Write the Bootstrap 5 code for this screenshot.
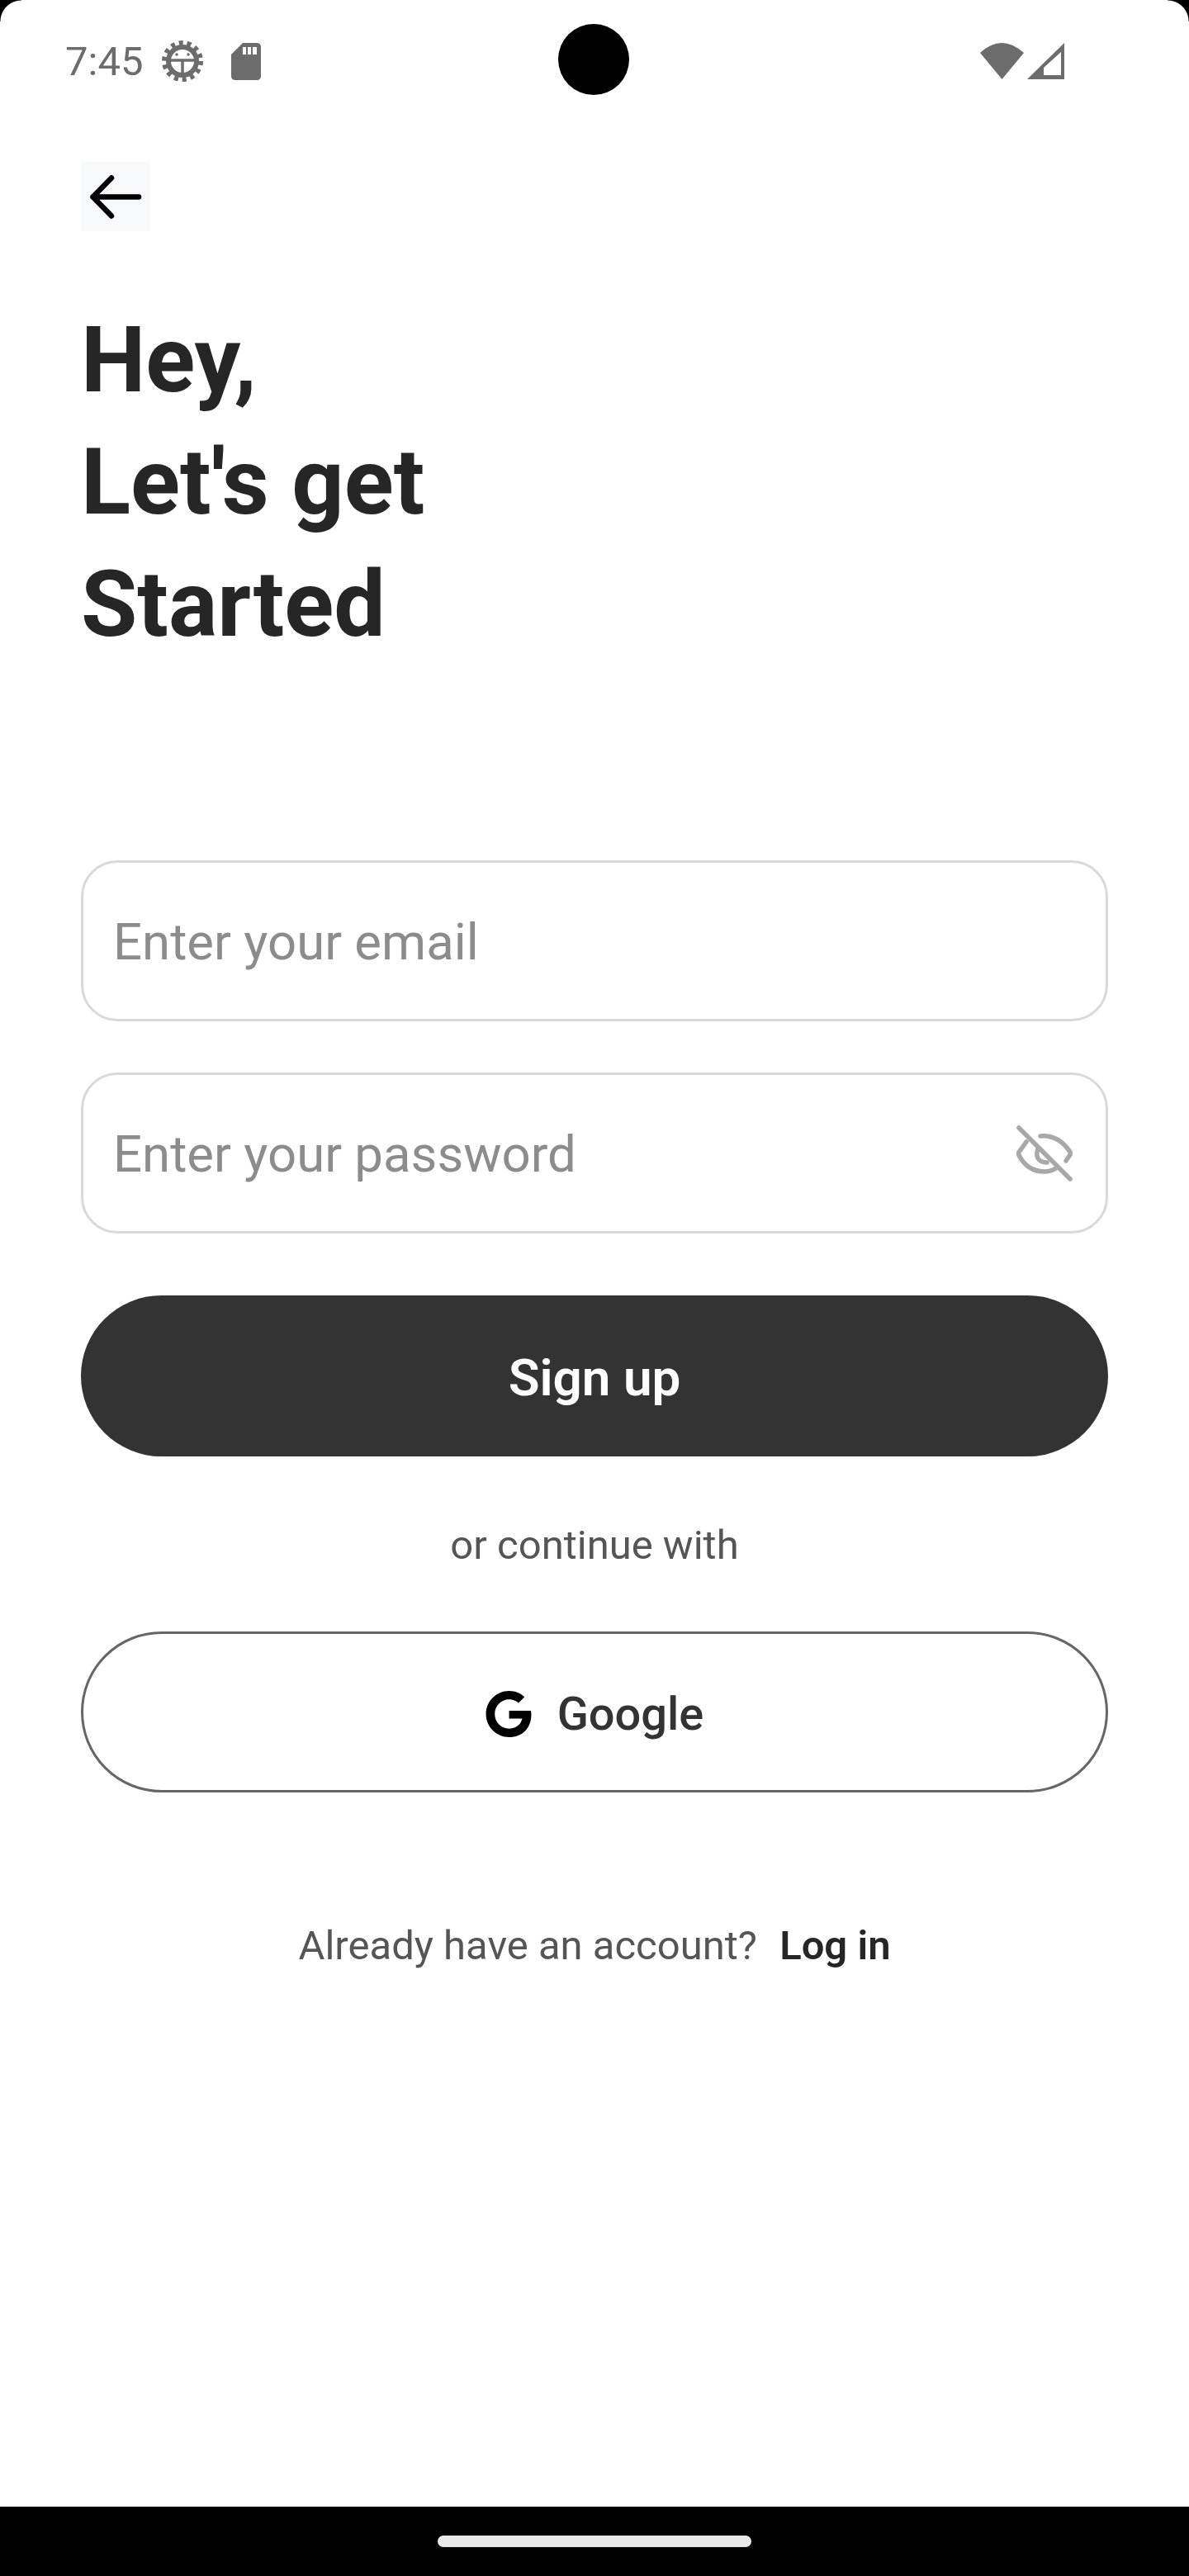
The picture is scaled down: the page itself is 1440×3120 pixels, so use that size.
<!DOCTYPE html>
<html lang="en">
<head>
  <meta charset="UTF-8">
  <title>Sign up</title>
  <link rel="stylesheet" href="https://cdn.jsdelivr.net/npm/bootstrap@5.3.3/dist/css/bootstrap.min.css">
  <style>
    body { font-family: Roboto, "Liberation Sans", sans-serif; background: #fff; }
    .phone-screen { width: 1440px; height: 3120px; position: relative; overflow: hidden; background: #fff; }
    .corner { position: absolute; top: 0; width: 26px; height: 26px; }
    .corner-left { left: 0; background: radial-gradient(circle at 100% 100%, transparent 25px, #000 26px); }
    .corner-right { right: 0; background: radial-gradient(circle at 0 100%, transparent 25px, #000 26px); }
    .camera-dot { position: absolute; left: 676px; top: 29px; width: 86px; height: 86px; border-radius: 50%; background: #000; }
    .status-row { height: 148px; padding: 0 150px 0 79px; color: #6c6c6c; }
    .status-time { font-size: 49px; line-height: 1; margin-right: 23px; }
    .sd-icon { margin-left: 34px; }
    .signup-body { height: 2888px; padding: 48px 98px 0; }
    .back-btn { width: 84px; height: 84px; background: #f8f9fb; border: 0; padding: 0; }
    .hello-title { margin: 82px 0 236px; color: #262626; font-size: 111px; line-height: 148px; font-weight: 700; }
    .signup-input { height: 195px; border: 3px solid #d9d9d9; border-radius: 44px; padding: 3px 36px 0; font-size: 61.7px; color: #333; }
    .signup-input::placeholder { color: #8c8c8c; opacity: 1; }
    .email-input { margin-bottom: 62px; }
    .eye-btn { position: absolute; right: 43px; top: 50%; transform: translateY(-50%); line-height: 0; }
    .pill-btn { height: 195px; border-radius: 98px; padding-top: 10px; }
    .pill-dark { background: #333; color: #fff; border: 0; margin-top: 75px; font-size: 62px; font-weight: 600; }
    .pill-outline { background: #fff; color: #333; border: 3px solid #666; font-size: 56px; font-weight: 500; gap: 31px; }
    .or-text { margin: 80px 0 76px; font-size: 49px; line-height: 56px; color: #555; }
    .login-row { margin-top: 158px; font-size: 49px; line-height: 56px; color: #555; }
    .login-row a { color: #262626; font-weight: 600; text-decoration: none; margin-left: 15px; }
    .nav-strip { height: 84px; background: #000; }
    .nav-pill { width: 380px; height: 14px; border-radius: 7px; background: #e9e9e9; }
  </style>
</head>
<body>
  <div class="phone-screen">
    <div class="corner corner-left"></div>
    <div class="corner corner-right"></div>
    <div class="camera-dot"></div>

    <!-- status bar -->
    <div class="status-row d-flex align-items-center">
      <span class="status-time">7:45</span>
      <svg width="50" height="50" viewBox="0 0 50 50" fill="none" stroke="#6c6c6c">
        <circle cx="25" cy="25" r="22" stroke-width="6" stroke-dasharray="5 4.87"/>
        <circle cx="25" cy="25" r="17" stroke-width="6"/>
        <path d="M8 24H42M25 24V42" stroke-width="3.5"/>
        <circle cx="18" cy="17" r="1.8" fill="#6c6c6c" stroke="none"/>
        <circle cx="32" cy="17" r="1.8" fill="#6c6c6c" stroke="none"/>
      </svg>
      <svg width="36" height="45" viewBox="0 0 36 45" class="sd-icon">
        <path d="M14 0H31Q36 0 36 5V40Q36 45 31 45H5Q0 45 0 40V14Z" fill="#6c6c6c"/>
        <path d="M14 5H18V14H14ZM20 5H24V14H20ZM26 5H31V14H26Z" fill="#fff"/>
      </svg>
      <svg width="54" height="46" viewBox="0 0 54 46" class="ms-auto">
        <path d="M1 13Q27 -11 54 13L27.5 45Z" fill="#6c6c6c"/>
      </svg>
      <svg width="46" height="45" viewBox="0 0 46 45" class="ms-1">
        <path d="M45 0V44H0Z" fill="#6c6c6c"/>
        <path d="M20 30L41 11V39H20Z" fill="#fff"/>
      </svg>
    </div>

    <div class="signup-body">
      <button class="back-btn d-flex align-items-center justify-content-center" type="button" aria-label="Back">
        <svg width="64" height="56" viewBox="0 0 64 56" fill="none" stroke="#000" stroke-width="6.5" stroke-linecap="round" stroke-linejoin="round">
          <path d="M60 28.5H4.5M27 5.5L4.5 28.5L27 51.5"/>
        </svg>
      </button>

      <h1 class="hello-title">Hey,<br>Let's get<br>Started</h1>

      <form>
        <input type="email" class="form-control signup-input email-input" placeholder="Enter your email">
        <div class="position-relative">
          <input type="password" class="form-control signup-input" placeholder="Enter your password">
          <span class="eye-btn">
            <svg width="68" height="68" viewBox="0 0 68 68" fill="none" stroke="#a8a8a8" stroke-width="5.5" stroke-linecap="round" stroke-linejoin="round">
              <path d="M3 3L65 65"/>
              <path d="M12 20L2 34Q12 56 34 56Q43 56 49 51"/>
              <path d="M29 13Q52 11 66 34L60 43"/>
              <path d="M26 28Q21 44 37 45"/>
            </svg>
          </span>
        </div>
        <button type="button" class="btn pill-btn pill-dark w-100">Sign up</button>
      </form>

      <p class="or-text text-center">or continue with</p>

      <button type="button" class="btn pill-btn pill-outline w-100 d-flex align-items-center justify-content-center">
        <svg width="56" height="56" viewBox="0 0 24 24"><path d="M12.24 10.285V14.4h6.806c-.275 1.765-2.056 5.174-6.806 5.174-4.095 0-7.439-3.389-7.439-7.574s3.345-7.574 7.439-7.574c2.33 0 3.891.989 4.785 1.849l3.254-3.138C18.189 1.186 15.479 0 12.24 0c-6.635 0-12 5.365-12 12s5.365 12 12 12c6.926 0 11.52-4.869 11.52-11.726 0-.788-.085-1.39-.189-1.989H12.24z"/></svg>
        <span>Google</span>
      </button>

      <p class="login-row text-center">Already have an account? <a href="#">Log in</a></p>
    </div>

    <div class="nav-strip d-flex align-items-center justify-content-center">
      <div class="nav-pill"></div>
    </div>
  </div>
</body>
</html>
